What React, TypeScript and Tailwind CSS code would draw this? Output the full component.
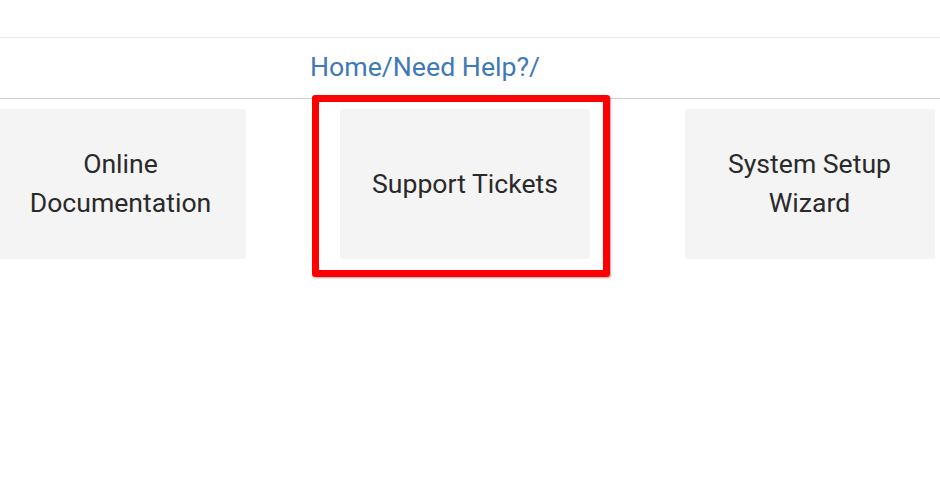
import React from "react";

export default function App() {
  const cards = [
    { lines: ["Online", "Documentation"] },
    { lines: ["Support Tickets"] },
    { lines: ["System Setup", "Wizard"] },
  ];
  return (
    <div
      className="relative w-[940px] h-[498px] overflow-hidden bg-white"
      style={{ fontFamily: "Roboto, 'Liberation Sans', sans-serif" }}
    >
      <div className="h-[37px]" />
      <div className="border-t border-[#e8e8e8] border-b border-b-[#d2d2d2] h-[62px] pt-[10px] pl-[310px]">
        <div className="text-[26.7px] leading-[39px] text-[#3f79b8] whitespace-nowrap">
          Home/Need Help?/
        </div>
      </div>
      <div className="flex gap-[94.5px] ml-[-4.5px] mt-[10px]">
        {cards.map((c, i) => (
          <div
            key={i}
            className="w-[250px] h-[150px] shrink-0 rounded-[3px] bg-[#f4f4f4] flex flex-col items-center justify-center pb-[2px] text-[26.6px] leading-[39px] text-[#2a2a2a] text-center"
          >
            {c.lines.map((l, j) => (
              <div key={j} className="whitespace-nowrap">
                {l}
              </div>
            ))}
          </div>
        ))}
      </div>
      <div className="absolute left-[312px] top-[95px] w-[298px] h-[182px] border-[7px] border-[#ff0000] rounded-[3px] shadow-[1px_1px_2px_rgba(0,0,0,0.35)]" />
    </div>
  );
}
